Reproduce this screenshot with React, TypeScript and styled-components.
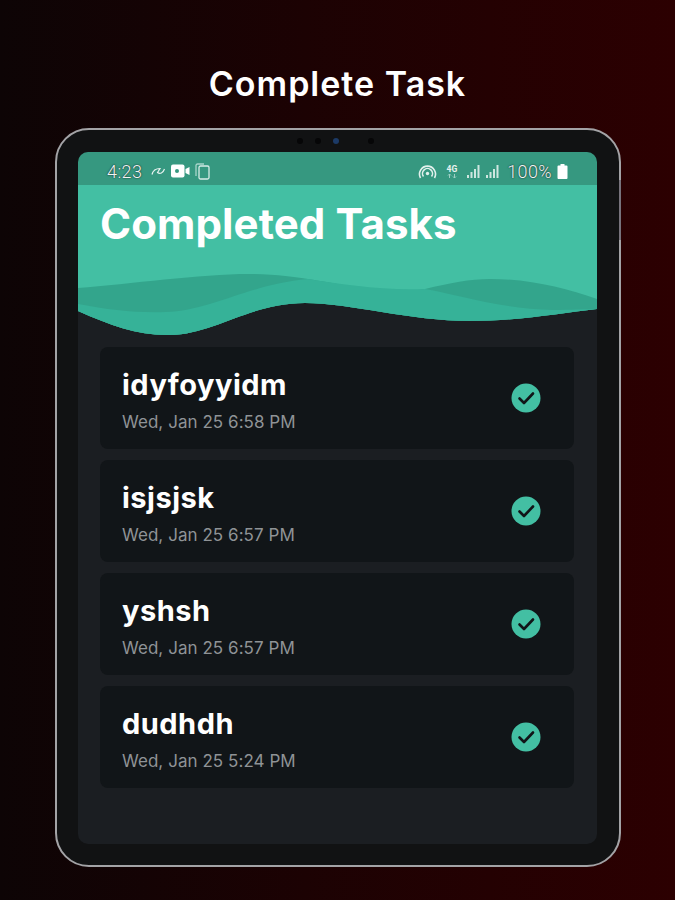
import * as React from 'react';
import styled, { createGlobalStyle } from 'styled-components';

const GlobalStyle = createGlobalStyle`
  html, body {
    margin: 0;
    padding: 0;
  }
  body {
    font-family: "Inter", "Noto Sans", sans-serif;
  }
`;

const Page = styled.div`
  box-sizing: border-box;
  width: 675px;
  height: 900px;
  padding-top: 62px;
  overflow: hidden;
  background: linear-gradient(90deg, #0d0405 0%, #1c0203 45%, #2c0001 100%);
`;

const Heading = styled.h1`
  margin: 0 0 23px;
  height: 43px;
  font-size: 34px;
  line-height: 43px;
  font-weight: 600;
  letter-spacing: 1px;
  text-align: center;
  color: #fff;
`;

const Tablet = styled.div`
  position: relative;
  box-sizing: border-box;
  width: 566px;
  height: 739px;
  margin-left: 55px;
  padding: 22px 22px 22px 21px;
  background: #111213;
  border: 2px solid #a3a3a6;
  border-radius: 34px;
`;

const CameraRow = styled.div`
  position: absolute;
  top: 8px;
  left: 240px;
  display: flex;
  align-items: center;
  gap: 12px;
`;

const Lens = styled.span<{ $blue?: boolean; $gap?: number }>`
  width: 6px;
  height: 6px;
  margin-left: ${p => p.$gap ?? 0}px;
  border-radius: 50%;
  background: ${p => (p.$blue ? '#1c3a66' : '#060607')};
`;

const SideButton = styled.span<{ $top: number; $height: number }>`
  position: absolute;
  top: ${p => p.$top}px;
  right: -2px;
  width: 2px;
  height: ${p => p.$height}px;
  background: #77737c;
`;

const Screen = styled.div`
  height: 692px;
  overflow: hidden;
  border-radius: 10px;
  background: #1b1e22;
`;

const StatusBar = styled.div`
  display: flex;
  align-items: center;
  justify-content: space-between;
  box-sizing: border-box;
  height: 33px;
  padding: 5px 29px 0 29px;
  background: #369880;
  color: #fff;
  font-family: "Roboto", sans-serif;
  font-size: 18px;
  font-weight: 300;
`;

const StatusGroup = styled.div`
  display: flex;
  align-items: center;
`;

const StatusText = styled.span<{ $gap?: number }>`
  margin-left: ${p => p.$gap ?? 0}px;
  letter-spacing: 0.4px;
  color: #f2f5f4;
  text-shadow: 0 0 2px #1c3a33, 0 0 1px #1c3a33;
`;

const StatusIcon = styled.svg<{ $gap: number }>`
  display: block;
  margin-left: ${p => p.$gap}px;
`;

const Banner = styled.div`
  background: #43bfa3;
`;

const BannerTitle = styled.h2`
  box-sizing: border-box;
  margin: 0;
  height: 85px;
  padding: 8px 0 0 22px;
  font-size: 42px;
  line-height: 62px;
  font-weight: 700;
  letter-spacing: 0.1px;
  color: #fff;
`;

const WaveBox = styled.div`
  background: #1b1e22;
`;

const Wave = styled.svg`
  display: block;
`;

const TaskList = styled.div`
  display: flex;
  flex-direction: column;
  gap: 11px;
  padding: 11px 23px 0 22px;
`;

const TaskCard = styled.div`
  display: flex;
  align-items: center;
  justify-content: space-between;
  box-sizing: border-box;
  height: 102px;
  padding: 0 33px 0 22px;
  border-radius: 8px;
  background: #111518;
`;

const TaskText = styled.div`
  padding-top: 6px;
`;

const TaskName = styled.div`
  font-size: 29px;
  line-height: 34px;
  font-weight: 700;
  letter-spacing: 0.5px;
  color: #fff;
`;

const TaskDate = styled.div`
  margin-top: 8px;
  font-size: 17px;
  line-height: 24px;
  letter-spacing: 0.05px;
  color: #8f9396;
`;

const tasks = [
  { name: 'idyfoyyidm', date: 'Wed, Jan 25 6:58 PM' },
  { name: 'isjsjsk', date: 'Wed, Jan 25 6:57 PM' },
  { name: 'yshsh', date: 'Wed, Jan 25 6:57 PM' },
  { name: 'dudhdh', date: 'Wed, Jan 25 5:24 PM' },
];

function WaveArt() {
  // x coordinates run 78..597 so the numbers read like the page position
  return (
    <Wave width="519" height="66" viewBox="78 270 519 66" preserveAspectRatio="none">
      <g transform="translate(0 270)">
        <path d="M78 0 L597 0 L597 39 C560 43 520 51 470 51 C410 51 350 33 305 33 C250 33 215 64 170 65 C140 66 112 56 78 41 Z" fill="#43bfa3" />
        <path d="M78 18 C130 14 200 4 249 4 C275 4 295 7 308 9 C340 14 390 25 425 19 C450 13 470 9 490 9 C530 9 565 18 597 29 L597 39 C560 43 520 51 470 51 C410 51 350 33 305 33 C250 33 215 64 170 65 C140 66 112 56 78 41 Z" fill="#33a58c" />
        <path d="M78 34 C110 40 135 43 166 42 C210 41 250 14 308 9 C340 14 385 21 425 19 C455 24 500 39 553 40 C570 40 585 39 597 39 C560 43 520 51 470 51 C410 51 350 33 305 33 C250 33 215 64 170 65 C140 66 112 56 78 41 Z" fill="#36b298" />
      </g>
    </Wave>
  );
}

function CheckBadge() {
  return (
    <svg width="30" height="30" viewBox="0 0 30 30">
      <circle cx="15" cy="15" r="14.5" fill="#43bfa3" />
      <path d="M8.5 15.5 L13 20 L22 10.5" fill="none" stroke="#111518" strokeWidth="2.6" strokeLinecap="round" strokeLinejoin="round" />
    </svg>
  );
}

export default function App() {
  return (
    <Page>
      <GlobalStyle />
      <Heading>Complete Task</Heading>
      <Tablet>
        <CameraRow>
          <Lens />
          <Lens />
          <Lens $blue />
          <Lens $gap={17} />
        </CameraRow>
        <SideButton $top={50} $height={60} />
        <Screen>
          <StatusBar>
            <StatusGroup>
              <StatusText>4:23</StatusText>
              <StatusIcon $gap={9} width="15" height="10" viewBox="0 0 15 10">
                <path d="M1 8.5 C2 4.5 5 2.5 9 2.5 L6.5 6.5 C9 8.5 12 7 13.5 3" fill="none" stroke="#e6f2ef" strokeWidth="1.2" />
              </StatusIcon>
              <StatusIcon $gap={5} width="19" height="14" viewBox="0 0 19 14">
                <rect x="0" y="0.5" width="13.5" height="13" rx="2" fill="#fff" />
                <circle cx="6" cy="7" r="2" fill="#369880" />
                <path d="M14.5 5 L18.5 3 V11 L14.5 9 Z" fill="#fff" />
              </StatusIcon>
              <StatusIcon $gap={5} width="15" height="17" viewBox="0 0 15 17">
                <rect x="4" y="3" width="10" height="13" rx="1.5" fill="none" stroke="#d7ece7" strokeWidth="1.3" />
                <path d="M1 13 V2.5 A1.5 1.5 0 0 1 2.5 1 H9" fill="none" stroke="#a8d5ca" strokeWidth="1.3" />
              </StatusIcon>
            </StatusGroup>
            <StatusGroup>
              <StatusIcon $gap={0} width="19" height="16" viewBox="0 0 19 16">
                <g fill="none" stroke="#e2f0ec" strokeWidth="1.6">
                  <path d="M2.5 15 A8 8 0 1 1 16.5 15" />
                  <path d="M5.5 13.5 A5 5 0 1 1 13.5 13.5" />
                </g>
                <circle cx="9.5" cy="10.5" r="1.7" fill="#e2f0ec" />
              </StatusIcon>
              <StatusIcon $gap={9} width="13" height="15" viewBox="0 0 13 15">
                <text x="0.5" y="8" fontSize="8.5" fontWeight="700" fontFamily="Roboto, sans-serif" fill="#e6f2ef">4G</text>
                <path d="M3.5 14 V10 M2 11.5 L3.5 10 L5 11.5 M8.5 10 V14 M7 12.5 L8.5 14 L10 12.5" fill="none" stroke="#9fd0c4" strokeWidth="1" />
              </StatusIcon>
              <StatusIcon $gap={7} width="14" height="14" viewBox="0 0 14 14">
                <path d="M1 11 H3 V14 H1 Z M4.5 8 H6.5 V14 H4.5 Z M8 5 H10 V14 H8 Z M11.5 1 H13.5 V14 H11.5 Z" fill="#cfe6e0" />
              </StatusIcon>
              <StatusIcon $gap={5} width="14" height="14" viewBox="0 0 14 14">
                <path d="M1 11 H3 V14 H1 Z M4.5 8 H6.5 V14 H4.5 Z M8 5 H10 V14 H8 Z M11.5 1 H13.5 V14 H11.5 Z" fill="#cfe6e0" />
              </StatusIcon>
              <StatusText $gap={8}>100%</StatusText>
              <StatusIcon $gap={5} width="11" height="15" viewBox="0 0 11 15">
                <path d="M3.5 0 H7.5 V1.5 H9.5 A1 1 0 0 1 10.5 2.5 V14 A1 1 0 0 1 9.5 15 H1.5 A1 1 0 0 1 0.5 14 V2.5 A1 1 0 0 1 1.5 1.5 H3.5 Z" fill="#fff" />
              </StatusIcon>
            </StatusGroup>
          </StatusBar>
          <Banner>
            <BannerTitle>Completed Tasks</BannerTitle>
            <WaveBox>
              <WaveArt />
            </WaveBox>
          </Banner>
          <TaskList>
            {tasks.map(task => (
              <TaskCard key={task.name}>
                <TaskText>
                  <TaskName>{task.name}</TaskName>
                  <TaskDate>{task.date}</TaskDate>
                </TaskText>
                <CheckBadge />
              </TaskCard>
            ))}
          </TaskList>
        </Screen>
      </Tablet>
    </Page>
  );
}
